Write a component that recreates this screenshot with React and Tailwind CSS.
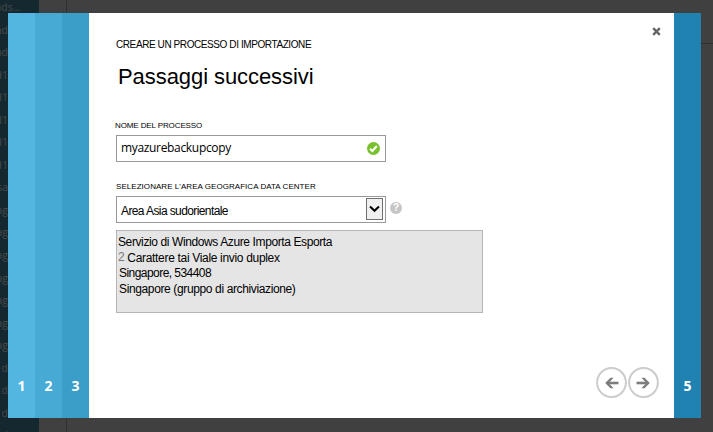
import React from "react";

const rows = ["nds...", "nd", "nd", "d1", "d1", "d1", "d1", "d1", "sa", "ag", "ag", "ag", "ag", "ag", "ag", "ag", "d", "d", "d", "d"];

function Step({ n, className }) {
  return (
    <div className={`flex w-[27px] shrink-0 flex-col items-center justify-end pb-[22px] font-['Open_Sans','Noto_Sans',sans-serif] text-[14px] leading-[20px] font-bold text-white ${className}`}>
      {n}
    </div>
  );
}

function ArrowButton({ flip }) {
  return (
    <button type="button" className="size-[31px]" aria-label={flip ? "Indietro" : "Avanti"}>
      <svg viewBox="0 0 31 31" className={`size-[31px] ${flip ? "-scale-x-100" : ""}`} fill="none">
        <circle cx="15.5" cy="15.5" r="14.4" stroke="#cccccc" strokeWidth="2" />
        <path d="M8.5 16H20" stroke="#7d7d7d" strokeWidth="2.6" />
        <path d="M13.4 10.8H16.6L21.8 16L16.6 21.2H13.4L18.4 16Z" fill="#7d7d7d" />
      </svg>
    </button>
  );
}

export default function App() {
  return (
    <div className="relative flex h-[432px] w-[713px] overflow-hidden bg-[#404040] font-['Liberation_Sans',Arial,sans-serif] text-black">
      <div className="flex w-[39px] shrink-0 flex-col overflow-hidden bg-[#15272f] font-['Open_Sans','Noto_Sans',sans-serif] text-[10.5px] text-[#464a4c]">
        <div className="-mt-[4px] flex w-[21px] flex-col items-end">
          {rows.map((t, i) => (
            <div key={i} className={`h-[22.55px] shrink-0 leading-[22px] whitespace-nowrap ${i === 0 ? "" : "pr-[13px]"}`}>{t}</div>
          ))}
        </div>
      </div>
      <div className="w-[28px] shrink-0 border-r border-[#303030]" />
      <div className="h-[44px] grow border-b border-[#303030]" />

      <div className="absolute top-[13px] left-[8px] flex h-[405px] w-[693px]">
        <Step n="1" className="bg-[#52b6e1]" />
        <Step n="2" className="bg-[#46aad5]" />
        <Step n="3" className="bg-[#3a9ec9]" />
        <main className="flex w-[585px] shrink-0 flex-col bg-white pr-[15px] pb-[20px] pl-[27px]">
          <header className="flex h-[78px] justify-between">
            <div>
              <p className="mt-[25px] text-[10px] leading-[14px] tracking-[-0.41px] whitespace-nowrap">CREARE UN PROCESSO DI IMPORTAZIONE</p>
              <h1 className="mt-[11px] ml-[2px] text-[22px] leading-[28px] tracking-[-0.07px] whitespace-nowrap">Passaggi successivi</h1>
            </div>
            <button type="button" aria-label="Chiudi" className="mt-[14px] mr-[-2px] size-[9px]">
              <svg viewBox="0 0 9 9" className="size-[9px]" fill="none" stroke="#666666" strokeWidth="2.4">
                <path d="M1.2 1.2L7.8 7.8M7.8 1.2L1.2 7.8" />
              </svg>
            </button>
          </header>

          <label className="mt-[29px] ml-[-1px] h-[15px] text-[8px] leading-[12px] tracking-[-0.11px] whitespace-nowrap">NOME DEL PROCESSO</label>
          <div className="flex h-[27px] w-[270px] items-center justify-between border border-[#999999] pr-[5px] pl-[4px]">
            <span className="-mt-[2px] font-['Open_Sans','Noto_Sans',sans-serif] text-[12px] leading-[20px] tracking-[-0.33px]">myazurebackupcopy</span>
            <svg viewBox="0 0 13 13" className="size-[13px]" fill="none">
              <circle cx="6.5" cy="6.5" r="6.5" fill="#78c02c" />
              <path d="M3 6.7L5.4 9L9.8 4" stroke="#fff" strokeWidth="2" />
            </svg>
          </div>

          <label className="mt-[19px] h-[15px] text-[8px] leading-[12px] tracking-[0.05px] whitespace-nowrap">SELEZIONARE L'AREA GEOGRAFICA DATA CENTER</label>
          <div className="flex items-center gap-[4px]">
            <div className="flex h-[27px] w-[270px] items-center justify-between border border-[#999999] pr-[2px] pl-[4px]">
              <span className="mt-[3px] text-[12px] leading-[20px] tracking-[-0.6px] whitespace-nowrap">Area Asia sudorientale</span>
              <div className="-mt-px flex h-[22px] w-[17px] items-center justify-center border border-[#707070] bg-[#f0f0f0]">
                <svg viewBox="0 0 11 8" className="h-[8px] w-[11px]" fill="none" stroke="#000" strokeWidth="2">
                  <path d="M1 1.5L5.5 5.8L10 1.5" />
                </svg>
              </div>
            </div>
            <div className="-mt-[3px] flex size-[12px] items-center justify-center rounded-full bg-[#c6c6c6] text-[10px] leading-[12px] font-bold text-white">?</div>
          </div>

          <div className="mt-[7px] flex h-[83px] w-[367px] flex-col border border-[#b5b5b5] bg-[#e5e5e5] pt-[4px] pl-[2px] text-[12px] leading-[15.7px] whitespace-nowrap">
            <p className="-ml-px tracking-[-0.39px]">Servizio di Windows Azure Importa Esporta</p>
            <p className="-ml-px flex tracking-[-0.32px]"><span className="-mt-px mr-[3px] text-[#777777]">2</span>Carattere tai Viale invio duplex</p>
            <p className="tracking-[-0.55px]">Singapore, 534408</p>
            <p className="tracking-[-0.37px]">Singapore (gruppo di archiviazione)</p>
          </div>

          <footer className="mt-auto flex justify-end gap-px">
            <ArrowButton flip />
            <ArrowButton />
          </footer>
        </main>
        <Step n="5" className="bg-[#1f82b0]" />
      </div>
    </div>
  );
}
